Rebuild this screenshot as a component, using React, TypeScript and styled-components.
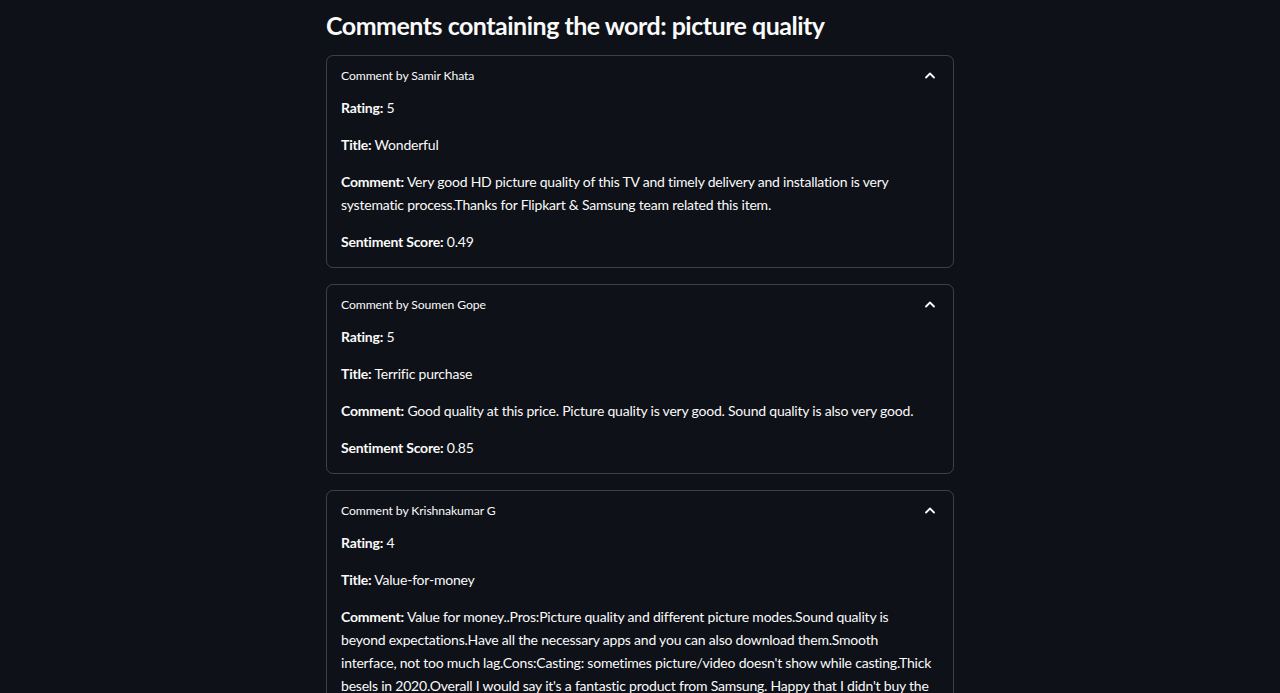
import React from "react";
import styled, { createGlobalStyle } from "styled-components";

const Global = createGlobalStyle`
  html, body { margin: 0; padding: 0; background: #0e1117; }
  body {
    color: #fafafa;
    font-family: Lato, "Noto Sans", sans-serif;
    -webkit-font-smoothing: antialiased;
  }
`;

const Page = styled.main`
  width: 628px;
  margin: 0 auto;
  padding: 10px 0 40px;
  display: flex;
  flex-direction: column;
  gap: 16px;
`;

const Heading = styled.h3`
  margin: 0 0 -2px;
  font-size: 25px;
  line-height: 31px;
  font-weight: 700;
  letter-spacing: -0.5px;
  color: #fafafa;
`;

const Expander = styled.section`
  border: 1px solid rgba(250, 250, 250, 0.2);
  border-radius: 7px;
  display: flex;
  flex-direction: column;
`;

const Summary = styled.header`
  display: flex;
  align-items: center;
  justify-content: space-between;
  padding: 10px 17px 10px 14px;
  font-size: 12.2px;
  letter-spacing: -0.1px;
  line-height: 20px;
`;

const Body = styled.div`
  padding: 0 17px 14px 14px;
  display: flex;
  flex-direction: column;
  gap: 14px;
`;

const Para = styled.p`
  margin: 0;
  font-size: 14px;
  letter-spacing: -0.21px;
  line-height: 23px;
`;

const Chevron = () => (
  <svg width="12" height="12" viewBox="0 0 12 12" fill="none">
    <polyline points="2,7.5 6,3.5 10,7.5" stroke="#fafafa" strokeWidth="1.8" strokeLinecap="round" strokeLinejoin="round" />
  </svg>
);

type Item = { author: string; rating: number; title: string; comment: string; score: string };

const items: Item[] = [
  {
    author: "Samir Khata",
    rating: 5,
    title: "Wonderful",
    comment:
      "Very good HD picture quality of this TV and timely delivery and installation is very systematic process.Thanks for Flipkart & Samsung team related this item.",
    score: "0.49",
  },
  {
    author: "Soumen Gope",
    rating: 5,
    title: "Terrific purchase",
    comment: "Good quality at this price. Picture quality is very good. Sound quality is also very good.",
    score: "0.85",
  },
  {
    author: "Krishnakumar G",
    rating: 4,
    title: "Value-for-money",
    comment:
      "Value for money..Pros:Picture quality and different picture modes.Sound quality is beyond expectations.Have all the necessary apps and you can also download them.Smooth interface, not too much lag.Cons:Casting: sometimes picture/video doesn't show while casting.Thick besels in 2020.Overall I would say it's a fantastic product from Samsung. Happy that I didn't buy the other brands.",
    score: "0.41",
  },
];

export default function App() {
  return (
    <>
      <Global />
      <Page>
        <Heading>Comments containing the word: picture quality</Heading>
        {items.map((it) => (
          <Expander key={it.author}>
            <Summary>
              <span>Comment by {it.author}</span>
              <Chevron />
            </Summary>
            <Body>
              <Para><b>Rating:</b> {it.rating}</Para>
              <Para><b>Title:</b> {it.title}</Para>
              <Para><b>Comment:</b> {it.comment}</Para>
              <Para><b>Sentiment Score:</b> {it.score}</Para>
            </Body>
          </Expander>
        ))}
      </Page>
    </>
  );
}
